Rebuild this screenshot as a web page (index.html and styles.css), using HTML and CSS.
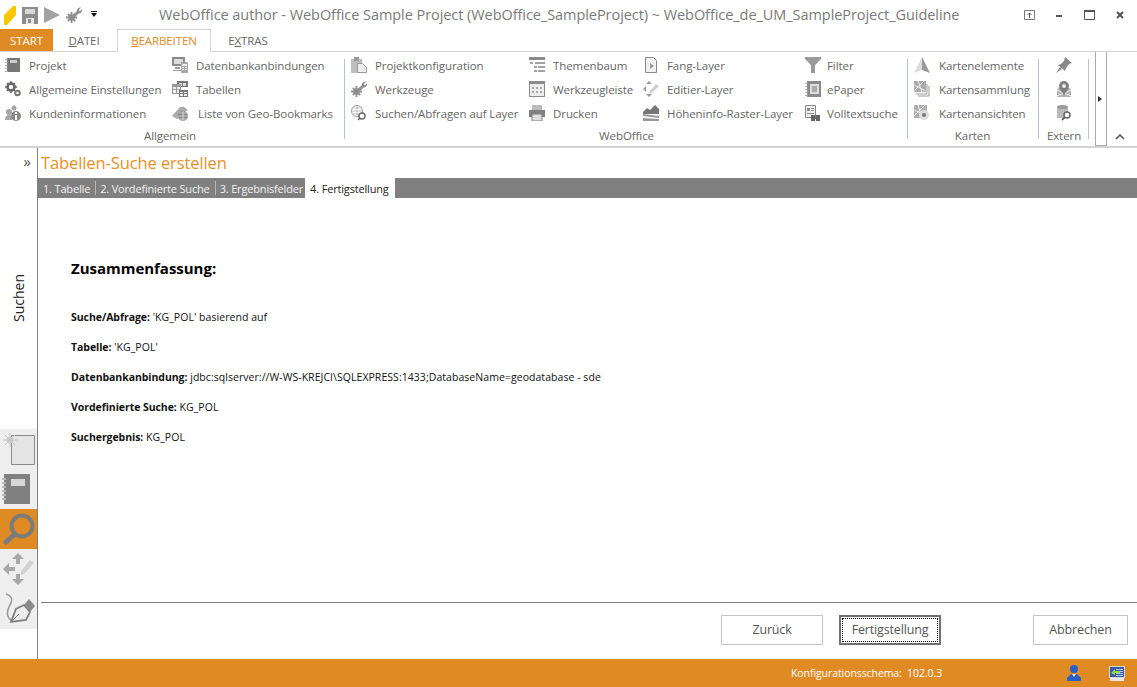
FILE: index.html
```html
<!DOCTYPE html>
<html lang="de">
<head>
<meta charset="utf-8">
<title>WebOffice author</title>
<link rel="stylesheet" href="styles.css">
</head>
<body>
<div class="app">
  <header class="titlebar">
    <div class="qat">
      <svg class="q-logo" width="12" height="20" viewBox="0 0 12 20"><path d="M0 10 9 1h3v9L3 20H0z" fill="#f7c800"/></svg>
      <svg width="16" height="18" viewBox="0 0 16 18"><path d="M0 1h16v17H0z" fill="#8c8c8c"/><path d="M3 3h10v5H3z" fill="#d8d8d8"/><path d="M4 12h8v6H4z" fill="#e6e6e6"/><path d="M6 13h3v4H6z" fill="#8c8c8c"/></svg>
      <svg width="16" height="16" viewBox="0 0 16 16"><path d="M0 0 16 8 0 16z" fill="#a2a2a2"/></svg>
      <svg width="16" height="16" viewBox="0 0 16 16"><use href="#i-tools"/></svg>
      <svg class="q-more" width="6" height="7" viewBox="0 0 6 7"><path d="M0 0h6v1H0zM0 2h6L3 6z" fill="#111"/></svg>
    </div>
    <div class="title">WebOffice author - WebOffice Sample Project (WebOffice_SampleProject) ~ WebOffice_de_UM_SampleProject_Guideline</div>
    <div class="winctl">
      <svg width="12" height="12" viewBox="0 0 12 12"><path d="M.5 1.500h10v9H.5z" fill="none" stroke="#777"/><path d="M5.500 9V4M3.500 6l2-2 2 2" fill="none" stroke="#555"/></svg>
      <svg width="12" height="12" viewBox="0 0 12 12"><path d="M2 6h6v2H2z" fill="#555"/></svg>
      <svg width="12" height="12" viewBox="0 0 12 12"><path d="M.5 1.500h10v9H.5z" fill="none" stroke="#555"/><path d="M0 1h11v2H0z" fill="#555"/></svg>
      <svg width="12" height="12" viewBox="0 0 12 12"><path d="M3 3l6 6M9 3l-6 6" stroke="#555" stroke-width="2"/></svg>
    </div>
  </header>

  <nav class="tabs">
    <span class="tab tab-start">START</span>
    <span class="tab tab-datei"><u>D</u>ATEI</span>
    <span class="tab tab-active"><u>B</u>EARBEITEN</span>
    <span class="tab tab-extras">E<u>X</u>TRAS</span>
  </nav>

  <section class="ribbon">
    <div class="group g-allgemein">
      <div class="items">
        <div class="item"><svg viewBox="0 0 16 16"><use href="#i-book"/></svg><span>Projekt</span></div>
        <div class="item"><svg viewBox="0 0 16 16"><use href="#i-db"/></svg><span>Datenbankanbindungen</span></div>
        <div class="item"><svg viewBox="0 0 16 16"><use href="#i-gears"/></svg><span>Allgemeine Einstellungen</span></div>
        <div class="item"><svg viewBox="0 0 16 16"><use href="#i-tables"/></svg><span>Tabellen</span></div>
        <div class="item"><svg viewBox="0 0 16 16"><use href="#i-info"/></svg><span>Kundeninformationen</span></div>
        <div class="item item-wide"><svg viewBox="0 0 16 16"><use href="#i-bookmark"/></svg><span>Liste von Geo-Bookmarks</span></div>
      </div>
      <div class="glabel">Allgemein</div>
    </div>
    <div class="group g-weboffice">
      <div class="items">
        <div class="item"><svg viewBox="0 0 16 16"><use href="#i-clip"/></svg><span>Projektkonfiguration</span></div>
        <div class="item"><svg viewBox="0 0 16 16"><use href="#i-tree"/></svg><span>Themenbaum</span></div>
        <div class="item"><svg viewBox="0 0 16 16"><use href="#i-doc"/></svg><span>Fang-Layer</span></div>
        <div class="item"><svg viewBox="0 0 16 16"><use href="#i-funnel"/></svg><span>Filter</span></div>
        <div class="item"><svg viewBox="0 0 16 16"><use href="#i-tools"/></svg><span>Werkzeuge</span></div>
        <div class="item"><svg viewBox="0 0 16 16"><use href="#i-bar"/></svg><span>Werkzeugleiste</span></div>
        <div class="item"><svg viewBox="0 0 16 16"><use href="#i-edit"/></svg><span>Editier-Layer</span></div>
        <div class="item"><svg viewBox="0 0 16 16"><use href="#i-paper"/></svg><span>ePaper</span></div>
        <div class="item"><svg viewBox="0 0 16 16"><use href="#i-search-globe"/></svg><span>Suchen/Abfragen auf Layer</span></div>
        <div class="item"><svg viewBox="0 0 16 16"><use href="#i-print"/></svg><span>Drucken</span></div>
        <div class="item"><svg viewBox="0 0 16 16"><use href="#i-height"/></svg><span>Höheninfo-Raster-Layer</span></div>
        <div class="item"><svg viewBox="0 0 16 16"><use href="#i-fulltext"/></svg><span>Volltextsuche</span></div>
      </div>
      <div class="glabel">WebOffice</div>
    </div>
    <div class="group g-karten">
      <div class="items">
        <div class="item"><svg viewBox="0 0 16 16"><use href="#i-north"/></svg><span>Kartenelemente</span></div>
        <div class="item"><svg viewBox="0 0 16 16"><use href="#i-maps"/></svg><span>Kartensammlung</span></div>
        <div class="item"><svg viewBox="0 0 16 16"><use href="#i-mapview"/></svg><span>Kartenansichten</span></div>
      </div>
      <div class="glabel">Karten</div>
    </div>
    <div class="group g-extern">
      <div class="items">
        <div class="item"><svg viewBox="0 0 16 16"><use href="#i-pin"/></svg></div>
        <div class="item"><svg viewBox="0 0 16 16"><use href="#i-mappin"/></svg></div>
        <div class="item"><svg viewBox="0 0 16 16"><use href="#i-dbsearch"/></svg></div>
      </div>
      <div class="glabel">Extern</div>
    </div>
    <div class="scroller"><svg width="4" height="6" viewBox="0 0 4 6"><path d="M0 0l4 3-4 3z" fill="#333"/></svg></div>
    <div class="collapse"><svg width="10" height="6" viewBox="0 0 10 6"><path d="M1 5l4-4 4 4" fill="none" stroke="#555" stroke-width="1.600"/></svg></div>
  </section>

  <div class="body">
    <aside class="sidebar">
      <div class="expander">»</div>
      <div class="side-label">Suchen</div>
      <ul class="side-icons">
        <li class="side-btn"><svg width="32" height="32" viewBox="0 0 32 32"><path d="M8.500 2.500h23v29h-23z" fill="#e4e4e4" stroke="#8a8a8a"/><circle cx="7" cy="7" r="3.500" fill="#cfcfcf"/><path d="M7 0v14M0 7h14M2 2l10 10M12 2 2 12" stroke="#c4c4c4"/></svg></li>
        <li class="side-btn side-btn-note"><svg width="28" height="30" viewBox="0 0 28 30"><path d="M2 0h26v30H2z" fill="#808080"/><path d="M9 5h14v7H9z" fill="#d6d6d6"/><path d="M0 4h4v2H0zm0 4h4v2H0zm0 4h4v2H0zm0 4h4v2H0zm0 4h4v2H0zm0 4h4v2H0z" fill="#b8b8b8"/></svg></li>
        <li class="side-btn side-btn-on"><svg width="32" height="32" viewBox="0 0 32 32"><circle cx="19" cy="13" r="10.500" fill="none" stroke="#7c7c7c" stroke-width="4"/><path d="M12 21 3 29" stroke="#7c7c7c" stroke-width="5" stroke-linecap="round"/></svg></li>
        <li class="side-btn"><svg width="32" height="32" viewBox="0 0 32 32"><path d="M15 0l6 6h-12zM15 32l6-6h-12zM0 16l6-6v12z" fill="#a8a8a8"/><path d="M6 14h6v4H6zM13 6h4v5h-4zM13 21h4v5h-4z" fill="#a8a8a8"/><path d="M18 18l9-11 4 3-10 11-4 1z" fill="#d2d2d2"/></svg></li>
        <li class="side-btn"><svg width="32" height="32" viewBox="0 0 32 32"><path d="M3 1c6 2 7 6 4 11s-5 11 2 16" fill="none" stroke="#9a9a9a" stroke-width="1.500"/><path d="M8 29l5-13 8-4 6 7-4 8z" fill="none" stroke="#7f7f7f" stroke-width="1.800"/><path d="M8 29l8-8" stroke="#7f7f7f"/><path d="M21 12l5-6 6 7-5 6z" fill="#8a8a8a"/></svg></li>
      </ul>
    </aside>
    <main class="content">
      <h1 class="page-title">Tabellen-Suche erstellen</h1>
      <div class="steps">
        <span class="step">1. Tabelle</span>
        <span class="step">2. Vordefinierte Suche</span>
        <span class="step step-last">3. Ergebnisfelder</span>
        <span class="step step-on">4. Fertigstellung</span>
      </div>
      <div class="summary">
        <h2>Zusammenfassung:</h2>
        <p><b>Suche/Abfrage:</b> 'KG_POL' basierend auf</p>
        <p><b>Tabelle:</b> 'KG_POL'</p>
        <p><b>Datenbankanbindung:</b> jdbc:sqlserver://W-WS-KREJCI\SQLEXPRESS:1433;DatabaseName=geodatabase - sde</p>
        <p><b>Vordefinierte Suche:</b> KG_POL</p>
        <p><b>Suchergebnis:</b> KG_POL</p>
      </div>
      <div class="actions">
        <button class="btn btn-back">Zurück</button>
        <button class="btn btn-focus"><span>Fertigstellung</span></button>
        <button class="btn btn-cancel">Abbrechen</button>
      </div>
    </main>
  </div>

  <footer class="status">
    <span class="schema">Konfigurationsschema:&nbsp; 102.0.3</span>
    <svg width="14" height="16" viewBox="0 0 14 16"><circle cx="7" cy="4" r="4" fill="#2a5fc4"/><path d="M0 16v-3l4-4h6l4 4v3z" fill="#2a5fc4"/><path d="M5 9h4l-2 3z" fill="#e8e8e8"/></svg>
    <svg width="16" height="15" viewBox="0 0 16 15"><path d="M0 0h16v12H0z" fill="#d8d8d8"/><path d="M1 1h14v10H1z" fill="#3a58a8"/><path d="M7 3h7v1H7zm0 2h7v1H7zm0 2h7v1H7zm0 2h7v1H7z" fill="#b8c8e8"/><path d="M2 7l4-4v2h5v2H6v2z" fill="#8fdc3c"/><path d="M1 12h14v3H1z" fill="#e8e8e8"/></svg>
  </footer>
</div>

<svg class="defs" width="0" height="0" aria-hidden="true">
  <symbol id="i-book" viewBox="0 0 16 16"><path d="M2 1h13v14H2z" fill="#777"/><path d="M5 3h7v3H5z" fill="#ccc"/><path d="M0 2h3v1H0zm0 3h3v1H0zm0 3h3v1H0zm0 3h3v1H0zm0 3h3v1H0z" fill="#aaa"/></symbol>
  <symbol id="i-db" viewBox="0 0 16 16"><path d="M0 0h13v9H0z" fill="#8a8a8a"/><path d="M2 2h9v5H2z" fill="#ddd"/><path d="M9 5h7v11H9z" fill="#a8a8a8"/><path d="M10 7h5v2h-5zm0 3h2v1h-2zm3 0h2v1h-2zm-3 2h2v1h-2zm3 0h2v1h-2z" fill="#eee"/><path d="M3 10h5v2H3zM1 13h8v1H1z" fill="#999"/></symbol>
  <symbol id="i-gears" viewBox="0 0 16 16"><circle cx="6" cy="6" r="3.500" fill="none" stroke="#666" stroke-width="2.600"/><circle cx="12.500" cy="12" r="2.300" fill="none" stroke="#777" stroke-width="2"/><path d="M6 0v2M6 10v2M0 6h2M10 6h2M2 2l1 1M9 9l1 1M10 2 9 3M2 10l1-1" stroke="#666" stroke-width="1.500"/></symbol>
  <symbol id="i-tables" viewBox="0 0 16 16"><path d="M5 0h11v6H5z" fill="#777"/><path d="M7 2h3v3H7zm4 0h3v3h-3z" fill="#ddd"/><path d="M0 3h9v10H0z" fill="#999"/><path d="M1 6h3v2H1zm4 0h3v2H5zm-4 3h3v3H1zm4 0h3v3H5z" fill="#eee"/><path d="M7 9h9v7H7z" fill="#777"/><path d="M8 11h3v1H8zm4 0h3v1h-3zm-4 2h3v2H8zm4 0h3v2h-3z" fill="#eee"/></symbol>
  <symbol id="i-info" viewBox="0 0 16 16"><circle cx="4" cy="7" r="3" fill="#a6a6a6"/><path d="M0 15c0-4 2-5 4-5s3 1 3 2v3z" fill="#a6a6a6"/><circle cx="9" cy="3" r="2.500" fill="#a6a6a6"/><circle cx="11" cy="11" r="5" fill="#8a8a8a"/><path d="M10 7h2v2h-2zm0 3h2v5h-2z" fill="#fff"/></symbol>
  <symbol id="i-bookmark" viewBox="0 0 16 16"><path d="M0 11 8 2h3v-1l5 4-5 3-6 6z" fill="#aaa"/><circle cx="11" cy="11" r="5" fill="#888"/><path d="M6 11h10M11 6v10M7.500 8h7M7.500 14h7" stroke="#eee" stroke-width=".7"/></symbol>
  <symbol id="i-clip" viewBox="0 0 16 16"><path d="M0 2h11v14H0z" fill="#bdbdbd"/><path d="M3 0h5v4H3z" fill="#999"/><path d="M6.500 6.500h5l4 4v5h-9z" fill="#eee" stroke="#999"/></symbol>
  <symbol id="i-tree" viewBox="0 0 16 16"><path d="M0 0h16v3H0z" fill="#8a8a8a"/><path d="M1 5h3v2H1zM6 5h10v2H6zM5 9h3v2H5zM9 9h7v2H9zM5 13h3v2H5zM9 13h7v2H9z" fill="#a2a2a2"/></symbol>
  <symbol id="i-doc" viewBox="0 0 16 16"><path d="M2.500.500h8l3 3v12h-11z" fill="#f0f0f0" stroke="#888"/><path d="M7 6l4 3-4 3z" fill="#999"/></symbol>
  <symbol id="i-funnel" viewBox="0 0 16 16"><path d="M0 0h16v2l-6 6v8H6V8L0 2z" fill="#9a9a9a"/></symbol>
  <symbol id="i-tools" viewBox="0 0 16 16"><circle cx="5.500" cy="10.500" r="3.200" fill="#8f8f8f"/><circle cx="5.500" cy="10.500" r="1.100" fill="#eee"/><path d="M5.500 5v11M0 10.500h11M1.800 6.800l7.400 7.400M9.200 6.800l-7.400 7.400" stroke="#8f8f8f" stroke-width="1.800"/><path d="M7 8l4-4c-.5-2 1.500-4 4-3.500L12.800 3l1 1.200L16 2.500c.5 2.500-1.500 4.500-3.500 4L9 10z" fill="#8f8f8f"/></symbol>
  <symbol id="i-bar" viewBox="0 0 16 16"><path d="M0 0h16v16H0z" fill="#8a8a8a"/><path d="M1 3h14v12H1z" fill="#ececec"/><path d="M3 6h2v2H3zm4 0h2v2H7zm4 0h2v2h-2zm-8 4h2v2H3zm4 0h2v2H7zm4 0h2v2h-2z" fill="#aaa"/></symbol>
  <symbol id="i-edit" viewBox="0 0 16 16"><path d="M6 0l3 3H3zM6 16l3-3H3zM0 8l3-3v6z" fill="#9a9a9a"/><path d="M7 10l6-7 3 2-7 7-2 1z" fill="#cfcfcf"/></symbol>
  <symbol id="i-paper" viewBox="0 0 16 16"><path d="M2 0h14v16H2z" fill="#8a8a8a"/><path d="M5 3h9v10H5z" fill="#ddd"/><path d="M7 5h5v6H7z" fill="#aaa"/><path d="M0 2h3v1H0zm0 3h3v1H0zm0 3h3v1H0zm0 3h3v1H0zm0 3h3v1H0z" fill="#aaa"/></symbol>
  <symbol id="i-search-globe" viewBox="0 0 16 16"><circle cx="6" cy="6" r="5.500" fill="none" stroke="#999"/><path d="M0 6h12M6 0v12M2 3h8M2 9h8" stroke="#aaa" stroke-width=".7"/><circle cx="11" cy="11" r="3" fill="#fff" stroke="#666" stroke-width="1.400"/><path d="M9 13l-2 2" stroke="#666" stroke-width="1.500"/></symbol>
  <symbol id="i-print" viewBox="0 0 16 16"><path d="M3 0h10v5H3z" fill="#bbb"/><path d="M0 5h16v7H0z" fill="#808080"/><path d="M3 9h10v7H3z" fill="#ddd" stroke="#808080"/></symbol>
  <symbol id="i-height" viewBox="0 0 16 16"><path d="M0 7l4-4 3 2 5-5 4 4v5H0z" fill="#777"/><path d="M0 9l16 2v2L0 11zM0 13l16 1v2H0z" fill="#999"/></symbol>
  <symbol id="i-fulltext" viewBox="0 0 16 16"><path d="M.5.500h10v12H.5z" fill="#eee" stroke="#888"/><path d="M2 3h3v3H2zm4 0h3v1H6zm0 2h3v1H6zM2 8h7v1H2z" fill="#888"/><path d="M6 10h4v6H6zm5 0h4v6h-4zm-2 2h3v2H9z" fill="#666"/></symbol>
  <symbol id="i-north" viewBox="0 0 16 16"><path d="M8 0 0 16l8-3z" fill="#dcdcdc"/><path d="M8 0l8 16-8-3z" fill="#999"/></symbol>
  <symbol id="i-maps" viewBox="0 0 16 16"><path d="M0 0h12v11H0z" fill="#aaa"/><path d="M0 4l12 6M4 0l4 11M10 0 0 10" stroke="#eee"/><path d="M13 3v10H2M15 5v10H4" fill="none" stroke="#999"/></symbol>
  <symbol id="i-mapview" viewBox="0 0 16 16"><path d="M0 0h13v13H0z" fill="#b0b0b0"/><path d="M0 5l13 6M4 0l4 13M11 0 0 11" stroke="#eee"/><circle cx="10" cy="10" r="5" fill="#ddd"/><circle cx="10" cy="10" r="2" fill="#777"/></symbol>
  <symbol id="i-pin" viewBox="0 0 16 16"><path d="M9 0l7 6-3 1-3 4-1 3L2 8l3-1 3-3z" fill="#888"/><path d="M4 10 0 16l6-4z" fill="#888"/></symbol>
  <symbol id="i-mappin" viewBox="0 0 16 16"><path d="M1 8l4-2 6 0 4 2v8H1z" fill="#b4b4b4"/><path d="M1 9l14 6M15 9 1 15" stroke="#eee"/><path d="M8 0a5 5 0 0 1 5 5c0 3-3 6-5 9-2-3-5-6-5-9a5 5 0 0 1 5-5z" fill="#808080"/><circle cx="8" cy="5" r="2" fill="#eee"/></symbol>
  <symbol id="i-dbsearch" viewBox="0 0 16 16"><path d="M1 2h11v11H1z" fill="#bbb"/><ellipse cx="6.500" cy="2" rx="5.500" ry="2" fill="#999"/><circle cx="11" cy="10" r="3" fill="#fff" stroke="#666" stroke-width="1.500"/><path d="M9 12l-3 3" stroke="#666" stroke-width="1.800"/></symbol>
</svg>
</body>
</html>
```
FILE: styles.css
```css
* { box-sizing: border-box; }
html, body { margin: 0; padding: 0; }
body { width: 1137px; height: 687px; overflow: hidden; background: #fff; font-family: "Open Sans", "Noto Sans", sans-serif; color: #555; }
.defs { position: absolute; }
.app { display: flex; flex-direction: column; height: 687px; }

.titlebar { height: 29px; display: flex; align-items: center; flex: none; }
.qat { width: 159px; display: flex; align-items: center; gap: 6px; padding-left: 4px; }
.q-more { margin-left: 3px; }
.title { flex: 1; font-size: 14.5px; color: #7a7a7a; white-space: nowrap; letter-spacing: -0.06px; }
.winctl { display: flex; gap: 18px; padding-right: 11px; align-items: center; }

.tabs { height: 23px; display: flex; flex: none; font-size: 11.5px; letter-spacing: -0.1px; color: #666; position: relative; border-bottom: 1px solid #d4d4d4; }
.tab { display: flex; align-items: center; justify-content: center; height: 23px; }
.tab-start { width: 53px; background: #e08a24; color: #fff; height: 22px; }
.tab-datei { width: 64px; padding-right: 2px; }
.tab-active { width: 94px; color: #e08a24; background: #fff; border: 1px solid #d4d4d4; border-bottom: 1px solid #fff; height: 23px; }
.tab-extras { width: 74px; }

.ribbon { height: 96px; flex: none; display: flex; border-bottom: 2px solid #d4d4d4; font-size: 11.5px; letter-spacing: -0.08px; color: #666; }
.group { display: flex; flex-direction: column; height: 94px; position: relative; }
.group::after { content: ""; position: absolute; right: 0; top: 7px; height: 80px; width: 1px; background: #b5c3d8; }
.items { display: grid; grid-auto-rows: 24px; padding-top: 1px; height: 73px; }
.item { display: flex; align-items: center; white-space: nowrap; }
.item svg { width: 16px; height: 16px; flex: none; margin-right: 8px; }
.item-wide svg { margin-right: 10px; }
.glabel { text-align: center; font-size: 11.5px; height: 20px; line-height: 22px; }
.g-allgemein { width: 345px; padding: 0 10px 0 5px; }
.g-allgemein .items { grid-template-columns: 167px 1fr; }
.g-weboffice { width: 563px; padding-left: 6px; }
.g-weboffice .items { grid-template-columns: 178px 114px 162px 1fr; }
.g-weboffice .item:nth-child(4n) svg { margin-right: 6px; }
.g-weboffice .glabel { padding-right: 6px; }
.g-karten { width: 131px; padding-left: 6px; }
.g-karten .item svg { margin-right: 9px; }
.g-karten .glabel { padding-right: 8px; }
.g-extern { width: 50px; }
.g-extern .item { justify-content: center; }
.g-extern .item svg { margin-right: 0; }
.scroller { width: 12px; margin-left: 6px; height: 94px; border: 1px solid #aaa; border-top: 0; display: flex; align-items: center; justify-content: center; padding-right: 2px; }
.collapse { flex: 1; display: flex; justify-content: flex-end; align-items: flex-end; padding: 0 12px 6px 0; height: 94px; }

.body { flex: 1; display: flex; min-height: 0; }
.sidebar { width: 38px; flex: none; border-right: 1px solid #808080; display: flex; flex-direction: column; }
.expander { height: 26px; padding: 3px 6px 0 0; text-align: right; font-size: 15px; line-height: 20px; color: #555; }
.side-label { height: 255px; display: flex; align-items: center; justify-content: center; font-size: 14px; color: #222; writing-mode: vertical-rl; transform: rotate(180deg); padding-top: 8px; }
.side-icons { list-style: none; margin: 0; padding: 0; }
.side-btn { width: 37px; height: 40px; background: #eee; display: flex; align-items: center; justify-content: center; }
.side-btn-note svg { margin-right: 5px; }
.side-btn-on { background: #e08a24; }
.content { flex: 1; display: flex; flex-direction: column; min-width: 0; }
.page-title { margin: 0; height: 30px; padding: 3px 0 0 3px; font-size: 16.5px; font-weight: 400; line-height: 24px; color: #e88f26; letter-spacing: -0.1px; }
.steps { height: 20px; flex: none; background: #808080; display: flex; align-items: stretch; color: #f2f2f2; font-size: 11px; letter-spacing: -0.17px; }
.step { display: flex; align-items: center; padding: 0 5px; position: relative; white-space: nowrap; }
.step + .step::before { content: ""; position: absolute; left: 0; top: 3px; bottom: 3px; width: 1px; background: #b8b8b8; }
.step-last { padding-right: 2px; }
.step-on { background: #fff; color: #222; padding: 0 5px; width: 90px; }
.step-on::before { display: none; }

.summary { flex: 1; padding: 0 0 0 33px; color: #111; font-size: 10.5px; }
.summary h2 { margin: 60px 0 32px; font-size: 15px; font-weight: 700; line-height: 20px; color: #000; letter-spacing: -0.02px; }
.summary p { margin: 0 0 15.1px; height: 15px; line-height: 15px; white-space: nowrap; letter-spacing: 0.05px; }
.summary b { letter-spacing: -0.06px; }

.actions { height: 57px; flex: none; margin-left: 3px; border-top: 1px solid #808080; display: flex; align-items: flex-start; padding: 12px 9px 0 0; }
.btn { height: 30px; background: #fff; border: 1px solid #c4c4c4; font: inherit; font-size: 12.5px; letter-spacing: -0.15px; color: #555; padding: 0 0 2px; }
.btn-back { width: 102px; margin-left: 680px; }
.btn-focus { width: 102px; margin-left: 16px; border: 2px solid #707070; padding: 1px; }
.btn-focus span { display: flex; align-items: center; justify-content: center; height: 100%; border: 1px dotted #000; padding-bottom: 2px; }
.btn-cancel { width: 95px; margin-left: auto; }

.status { height: 28px; flex: none; background: #e08a24; display: flex; align-items: center; color: #fff; font-size: 10.5px; }
.status .schema { margin-left: 791px; width: 276px; letter-spacing: -0.08px; white-space: nowrap; }
.status svg:last-child { margin-left: 28px; }
```
